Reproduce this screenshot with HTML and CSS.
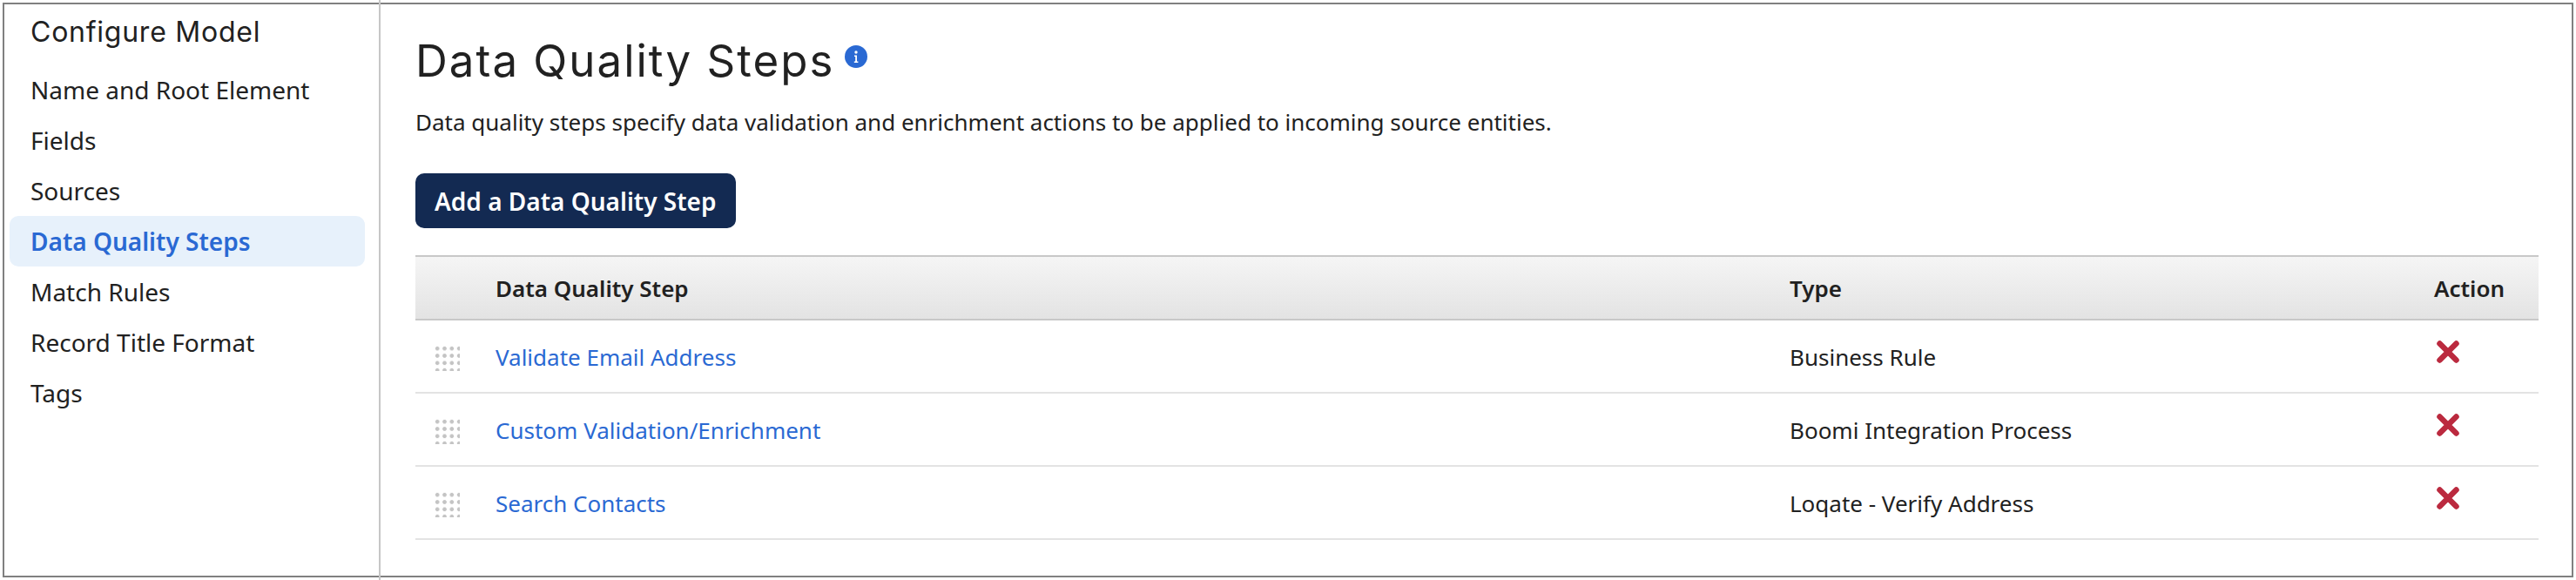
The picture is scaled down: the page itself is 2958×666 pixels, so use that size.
FILE: index.html
```html
<!DOCTYPE html>
<html lang="en">
<head>
    <meta charset="UTF-8">
    <title>Data Quality Steps</title>
    <link rel="stylesheet" href="styles.css">
</head>

<body>
    <div class="frame">
        <div class="sidebar">
            <h2 class="sidebar-title">Configure Model</h2>
            <ul class="side-nav">
                <li>Name and Root Element</li>
                <li>Fields</li>
                <li>Sources</li>
                <li class="active">Data Quality Steps</li>
                <li>Match Rules</li>
                <li>Record Title Format</li>
                <li>Tags</li>
            </ul>
        </div>

        <div class="content">
            <div class="title-row">
                <h1>Data Quality Steps</h1>
                <svg class="info-icon" viewBox="0 0 26 26" aria-hidden="true">
                    <circle cx="13" cy="13" r="13" fill="#2a69d3"/>
                    <circle cx="13" cy="8" r="1.7" fill="#fff"/>
                    <path d="M11 11.4h3v7h1.4v1.6h-4.6v-1.6h1.4v-5.4h-1.2z" fill="#fff"/>
                </svg>
            </div>
            <p class="intro">Data quality steps specify data validation and enrichment actions to be applied to incoming source entities.</p>
            <button class="add-button">Add a Data Quality Step</button>

            <table class="steps">
                <thead>
                    <tr>
                        <th class="col-drag"></th>
                        <th class="col-name">Data Quality Step</th>
                        <th class="col-type">Type</th>
                        <th class="col-action">Action</th>
                    </tr>
                </thead>
                <tbody>
                    <tr>
                        <td><span class="drag-handle"></span></td>
                        <td><a href="#">Validate Email Address</a></td>
                        <td>Business Rule</td>
                        <td><svg class="remove-icon" viewBox="0 0 26 26" aria-hidden="true"><path d="M3.5 3.5l19 19M22.5 3.5l-19 19"/></svg></td>
                    </tr>
                    <tr>
                        <td><span class="drag-handle"></span></td>
                        <td><a href="#">Custom Validation/Enrichment</a></td>
                        <td>Boomi Integration Process</td>
                        <td><svg class="remove-icon" viewBox="0 0 26 26" aria-hidden="true"><path d="M3.5 3.5l19 19M22.5 3.5l-19 19"/></svg></td>
                    </tr>
                    <tr>
                        <td><span class="drag-handle"></span></td>
                        <td><a href="#">Search Contacts</a></td>
                        <td>Loqate - Verify Address</td>
                        <td><svg class="remove-icon" viewBox="0 0 26 26" aria-hidden="true"><path d="M3.5 3.5l19 19M22.5 3.5l-19 19"/></svg></td>
                    </tr>
                </tbody>
            </table>
        </div>
    </div>
</body>

</html>
```

FILE: styles.css
```css
/* General styles */
html,
body {
    height: 100%;
}

body {
    font-family: "Noto Sans", "Open Sans", sans-serif;
    margin: 0;
    padding: 3px;
    box-sizing: border-box;
    background-color: #fff;
    color: #212121;
    overflow: hidden;
}

.frame {
    display: flex;
    height: 100%;
    box-sizing: border-box;
    border: 2px solid #808080;
}

/* Sidebar */
.sidebar {
    flex: 0 0 432px;
    box-sizing: border-box;
    margin: -5px 0;
    padding: 16px 16px 0 6px;
    border-right: 2px solid #c6c6c6;
}

.sidebar-title {
    margin: 0 0 16px;
    padding-left: 24px;
    font-family: Inter, sans-serif;
    font-size: 32px;
    font-weight: 400;
    letter-spacing: 0.75px;
    line-height: 42px;
}

.side-nav {
    list-style-type: none;
    margin: 0;
    padding: 0;
}

.side-nav li {
    height: 58px;
    padding-left: 24px;
    font-size: 28px;
    line-height: 58px;
    border-radius: 10px;
}

.side-nav li.active {
    background-color: #e7f1fb;
    color: #2a69d3;
    font-weight: 600;
}

/* Main content */
.content {
    flex: 1;
    padding: 30px 38px 0 40px;
}

.title-row {
    display: flex;
    align-items: flex-start;
    height: 70px;
}

h1 {
    margin: 0;
    font-family: Inter, sans-serif;
    font-size: 51px;
    font-weight: 400;
    letter-spacing: 2px;
    line-height: 70px;
}

.info-icon {
    width: 26px;
    height: 26px;
    margin: 17px 0 0 12px;
}

.intro {
    margin: 17px 0 0;
    font-size: 26px;
    line-height: 36px;
}

.add-button {
    display: block;
    height: 63px;
    margin-top: 41px;
    padding: 0 22px;
    border: none;
    border-radius: 10px;
    background-color: #132a52;
    color: #fff;
    font-family: inherit;
    font-size: 28px;
    font-weight: 600;
}

/* Steps table */
.steps {
    width: 100%;
    margin-top: 31px;
    border-collapse: collapse;
    table-layout: fixed;
    font-size: 26px;
}

.steps th {
    height: 71px;
    padding: 0;
    text-align: left;
    font-weight: 600;
    background: linear-gradient(#f5f5f5, #e3e3e3);
    border-top: 2px solid #c8c8c8;
    border-bottom: 2px solid #c8c8c8;
}

.steps td {
    height: 81px;
    padding: 1px 0 0;
    border-bottom: 2px solid #e3e3e3;
}

.col-drag {
    width: 92px;
}

.col-type {
    width: 740px;
}

.col-action {
    width: 120px;
}

.steps a {
    color: #2a69d3;
    text-decoration: none;
}

.drag-handle {
    display: block;
    width: 30px;
    height: 30px;
    margin: 3px 0 0 21px;
    background-image: radial-gradient(circle, #c4c4c4 2px, transparent 2.6px);
    background-size: 8.33px 8.33px;
}

.remove-icon {
    display: block;
    width: 26px;
    height: 26px;
    margin: -12px 0 0 3px;
    fill: none;
    stroke: #bb2a3f;
    stroke-width: 6.5;
    stroke-linecap: round;
}
```
